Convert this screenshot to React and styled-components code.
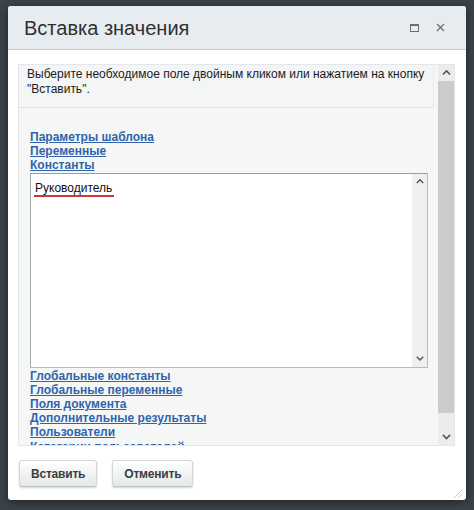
import React from "react";
import styled, { createGlobalStyle } from "styled-components";

const Global = createGlobalStyle`
  html, body {
    margin: 0;
    padding: 0;
    background: #3a4349;
    width: 474px;
    height: 510px;
    overflow: hidden;
    font-family: "Liberation Sans", Arial, sans-serif;
  }
`;

const Backdrop = styled.div`
  width: 474px;
  height: 510px;
  padding: 6px 8px 0 8px;
  box-sizing: border-box;
`;

const Dialog = styled.div`
  width: 458px;
  height: 494px;
  background: #fff;
  border-radius: 3px;
  box-shadow: 0 2px 8px rgba(0, 0, 0, 0.45);
  display: flex;
  flex-direction: column;
  position: relative;
  overflow: hidden;
`;

const Header = styled.div`
  height: 44px;
  flex: none;
  background: #e6ecef;
  border-bottom: 1px solid #c6cbce;
  display: flex;
  align-items: center;
  padding: 0 16px 0 16px;
  box-sizing: border-box;
`;

const Title = styled.div`
  flex: 1;
  font-size: 20px;
  color: #2f3133;
  padding-top: 1px;
`;

const HeaderIcons = styled.div`
  display: flex;
  align-items: center;
  gap: 17px;
  padding-right: 5px;
  color: #6a6f73;
`;

const Body = styled.div`
  padding: 14px 11px 0 10px;
`;

const ScrollArea = styled.div`
  height: 382px;
  display: flex;
  border: 1px solid #e3e7e9;
  box-sizing: border-box;
  background: #f5f7f7;
`;

const Content = styled.div`
  flex: 1;
  overflow: hidden;
`;

const Instruction = styled.div`
  margin: 0 4px 0 0;
  border-bottom: 1px solid #e1e5e7;
  border-right: 1px solid #e9ecee;
  background: #f3f5f6;
  padding: 2px 8px 10px 8px;
  font-size: 12px;
  line-height: 15px;
  color: #1b1b1b;
`;

const Tree = styled.div`
  padding: 22px 10px 0 11px;
`;

const Link = styled.a`
  display: block;
  font-size: 12px;
  line-height: 14.2px;
  font-weight: bold;
  color: #3064ad;
  text-decoration: underline;
  white-space: nowrap;
  cursor: pointer;
`;

const ListBox = styled.div`
  height: 195px;
  margin: 0 0 1px 0;
  width: 398px;
  box-sizing: border-box;
  border: 1px solid #b8bcbf;
  border-top-color: #9a9ea1;
  border-left-color: #a5a9ac;
  background: #fff;
  display: flex;
`;

const ListItems = styled.div`
  flex: 1;
  padding: 4px 0 0 3px;
`;

const Item = styled.div`
  display: inline-block;
  font-size: 12px;
  line-height: 14px;
  color: #111;
  border-bottom: 2px solid #c8383e;
  padding: 0 2px 0 1px;
`;

const Bar = styled.div`
  width: ${(p) => p.$w}px;
  flex: none;
  background: ${(p) => p.$track};
  display: flex;
  flex-direction: column;
  align-items: center;
`;

const Arrow = styled.div`
  height: ${(p) => p.$h}px;
  flex: none;
  display: flex;
  align-items: center;
  justify-content: center;
  color: #555;
`;

const Thumb = styled.div`
  width: 100%;
  height: ${(p) => p.$h}px;
  background: #cbcbcb;
  flex: none;
`;

const Fill = styled.div`
  flex: 1;
`;

const Footer = styled.div`
  display: flex;
  gap: 15px;
  padding: 14px 0 0 11px;
`;

const Button = styled.button`
  height: 27px;
  padding: 0 11px;
  font-family: "Liberation Sans", Arial, sans-serif;
  font-size: 12px;
  font-weight: bold;
  letter-spacing: -0.2px;
  color: #3a3d40;
  border: 1px solid #d3d7da;
  border-bottom-color: #bfc4c7;
  border-radius: 3px;
  background: linear-gradient(#ffffff, #e4e8ea);
  box-shadow: 0 1px 2px rgba(0, 0, 0, 0.18);
  cursor: pointer;
`;

const Grip = styled.div`
  position: absolute;
  right: 3px;
  bottom: 3px;
  width: 12px;
  height: 12px;
`;

const Chevron = ({ up, size = 8 }) => (
  <svg width={size} height={size * 0.6} viewBox="0 0 10 6">
    <path
      d={up ? "M1 5 L5 1 L9 5" : "M1 1 L5 5 L9 1"}
      fill="none"
      stroke="currentColor"
      strokeWidth="1.8"
    />
  </svg>
);

const topLinks = ["Параметры шаблона", "Переменные", "Константы"];
const bottomLinks = [
  "Глобальные константы",
  "Глобальные переменные",
  "Поля документа",
  "Дополнительные результаты",
  "Пользователи",
  "Категории пользователей",
];

export default function App() {
  return (
    <>
      <Global />
      <Backdrop>
        <Dialog>
          <Header>
            <Title>Вставка значения</Title>
            <HeaderIcons>
              <svg width="9" height="8" viewBox="0 0 9 8">
                <rect x="0.5" y="0.5" width="8" height="7" fill="none" stroke="currentColor" />
                <line x1="0" y1="1.5" x2="9" y2="1.5" stroke="currentColor" />
              </svg>
              <svg width="9" height="9" viewBox="0 0 9 9">
                <path d="M1 1 L8 8 M8 1 L1 8" stroke="currentColor" strokeWidth="1.3" />
              </svg>
            </HeaderIcons>
          </Header>
          <Body>
            <ScrollArea>
              <Content>
                <Instruction>
                  Выберите необходимое поле двойным кликом или нажатием на кнопку
                  <br />
                  "Вставить".
                </Instruction>
                <Tree>
                  {topLinks.map((t) => (
                    <Link key={t}>{t}</Link>
                  ))}
                  <ListBox>
                    <ListItems>
                      <Item>Руководитель</Item>
                    </ListItems>
                    <Bar $w={15} $track="#efefef">
                      <Arrow $h={16}>
                        <Chevron up size={8} />
                      </Arrow>
                      <Fill />
                      <Arrow $h={16}>
                        <Chevron size={8} />
                      </Arrow>
                    </Bar>
                  </ListBox>
                  {bottomLinks.map((t) => (
                    <Link key={t}>{t}</Link>
                  ))}
                </Tree>
              </Content>
              <Bar $w={16} $track="#ececec">
                <Arrow $h={16}>
                  <Chevron up size={9} />
                </Arrow>
                <Thumb $h={332} />
                <Fill />
                <Arrow $h={16}>
                  <Chevron size={9} />
                </Arrow>
              </Bar>
            </ScrollArea>
          </Body>
          <Footer>
            <Button>Вставить</Button>
            <Button>Отменить</Button>
          </Footer>
          <Grip>
            <svg width="12" height="12" viewBox="0 0 12 12">
              <path d="M11 3 L3 11 M11 7 L7 11" stroke="#c9cdd0" strokeWidth="1" />
            </svg>
          </Grip>
        </Dialog>
      </Backdrop>
    </>
  );
}
